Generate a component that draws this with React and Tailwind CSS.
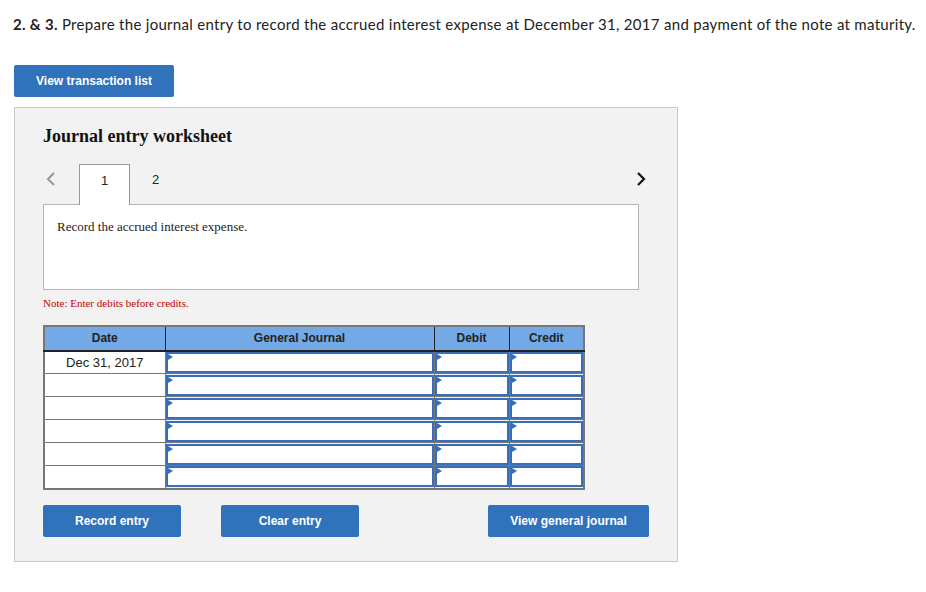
import React from 'react';

const ROWS = ['Dec 31, 2017', '', '', '', '', ''];

const Marker = () => (
  <span className="absolute left-0 top-0 w-0 h-0 border-t-[3px] border-b-[3px] border-l-[5px] border-t-transparent border-b-transparent border-l-[#2f6fc0]" />
);

const InputCell = ({ w }) => (
  <td className={`${w} h-[23px] p-0 border border-[#777]`}>
    <div className="relative h-[21px] border-2 border-[#3a6fb8] bg-white">
      <Marker />
    </div>
  </td>
);

const BlueButton = ({ children, className = '' }) => (
  <button
    className={`h-8 bg-[#3172bd] text-white text-[12px] font-bold rounded-[2px] ${className}`}
    style={{ fontFamily: '"Liberation Sans", Arial, sans-serif' }}
  >
    {children}
  </button>
);

export default function App() {
  return (
    <div className="bg-white min-h-[592px] w-[926px] pt-[14px] text-[#222]">
      <p className="pl-[13px] text-[15px] leading-5 tracking-[0.3px]" style={{ fontFamily: 'Lato, "Open Sans", sans-serif' }}>
        <span className="font-bold">2. &amp; 3.</span> Prepare the journal entry to record the accrued interest expense at December 31, 2017 and payment of the note at maturity.
      </p>

      <div className="pl-[14px] mt-[31px]">
        <BlueButton className="w-40">View transaction list</BlueButton>
      </div>

      <div className="ml-[14px] mt-[10px] w-[664px] h-[455px] bg-[#f2f2f2] border border-[#c8c8c8] px-7 pt-[16px]">
        <h2 className="text-[18px] leading-6 font-bold text-[#111]" style={{ fontFamily: '"Liberation Serif", serif' }}>
          Journal entry worksheet
        </h2>

        <div className="mt-[15px] w-[596px] flex items-end relative h-[41px]">
          <svg width="12" height="16" viewBox="0 0 12 16" className="mb-[17px] ml-[2px]">
            <path d="M9 2 L3 8 L9 14" fill="none" stroke="#999" strokeWidth="2" />
          </svg>
          <div className="ml-[22px] w-[51px] h-[41px] bg-white border border-b-0 border-[#999] flex items-center justify-center pb-2 text-[13px] relative z-10 -mb-px" style={{ fontFamily: '"Liberation Sans", sans-serif' }}>
            1
          </div>
          <div className="w-[51px] h-[41px] flex items-center justify-center pb-2 text-[13px]" style={{ fontFamily: '"Liberation Sans", sans-serif' }}>
            2
          </div>
          <svg width="12" height="16" viewBox="0 0 12 16" className="absolute right-[-8px] top-[8px]">
            <path d="M3 2 L9 8 L3 14" fill="none" stroke="#111" strokeWidth="2.2" />
          </svg>
        </div>

        <div className="w-[596px] h-[86px] bg-white border border-[#b5b5b5] px-[13px] pt-[12px]">
          <p className="text-[13px]" style={{ fontFamily: '"Liberation Serif", serif' }}>
            Record the accrued interest expense.
          </p>
        </div>

        <p className="mt-[5px] text-[11px] text-[#c40000]" style={{ fontFamily: '"Liberation Serif", serif' }}>
          Note: Enter debits before credits.
        </p>

        <table className="mt-[13px] border-collapse border-2 border-[#777] text-[12px]" style={{ fontFamily: '"Liberation Sans", sans-serif' }}>
          <thead>
            <tr className="bg-[#72a9e6] h-[25px] text-[#222]">
              <th className="w-[121px] border-r border-b-2 border-[#222] font-bold">Date</th>
              <th className="w-[269px] border-r border-b-2 border-[#222] font-bold">General Journal</th>
              <th className="w-[75px] border-r border-b-2 border-[#222] font-bold">Debit</th>
              <th className="w-[75px] border-b-2 border-[#222] font-bold">Credit</th>
            </tr>
          </thead>
          <tbody>
            {ROWS.map((d, i) => (
              <tr key={i}>
                <td className="w-[121px] h-[23px] bg-white border border-[#777] text-center text-[13px] text-[#222] p-0">{d}</td>
                <InputCell w="w-[269px]" />
                <InputCell w="w-[75px]" />
                <InputCell w="w-[75px]" />
              </tr>
            ))}
          </tbody>
        </table>

        <div className="mt-[15px] w-[606px] flex">
          <BlueButton className="w-[138px]">Record entry</BlueButton>
          <BlueButton className="w-[138px] ml-10">Clear entry</BlueButton>
          <BlueButton className="w-[161px] ml-auto">View general journal</BlueButton>
        </div>
      </div>
    </div>
  );
}
